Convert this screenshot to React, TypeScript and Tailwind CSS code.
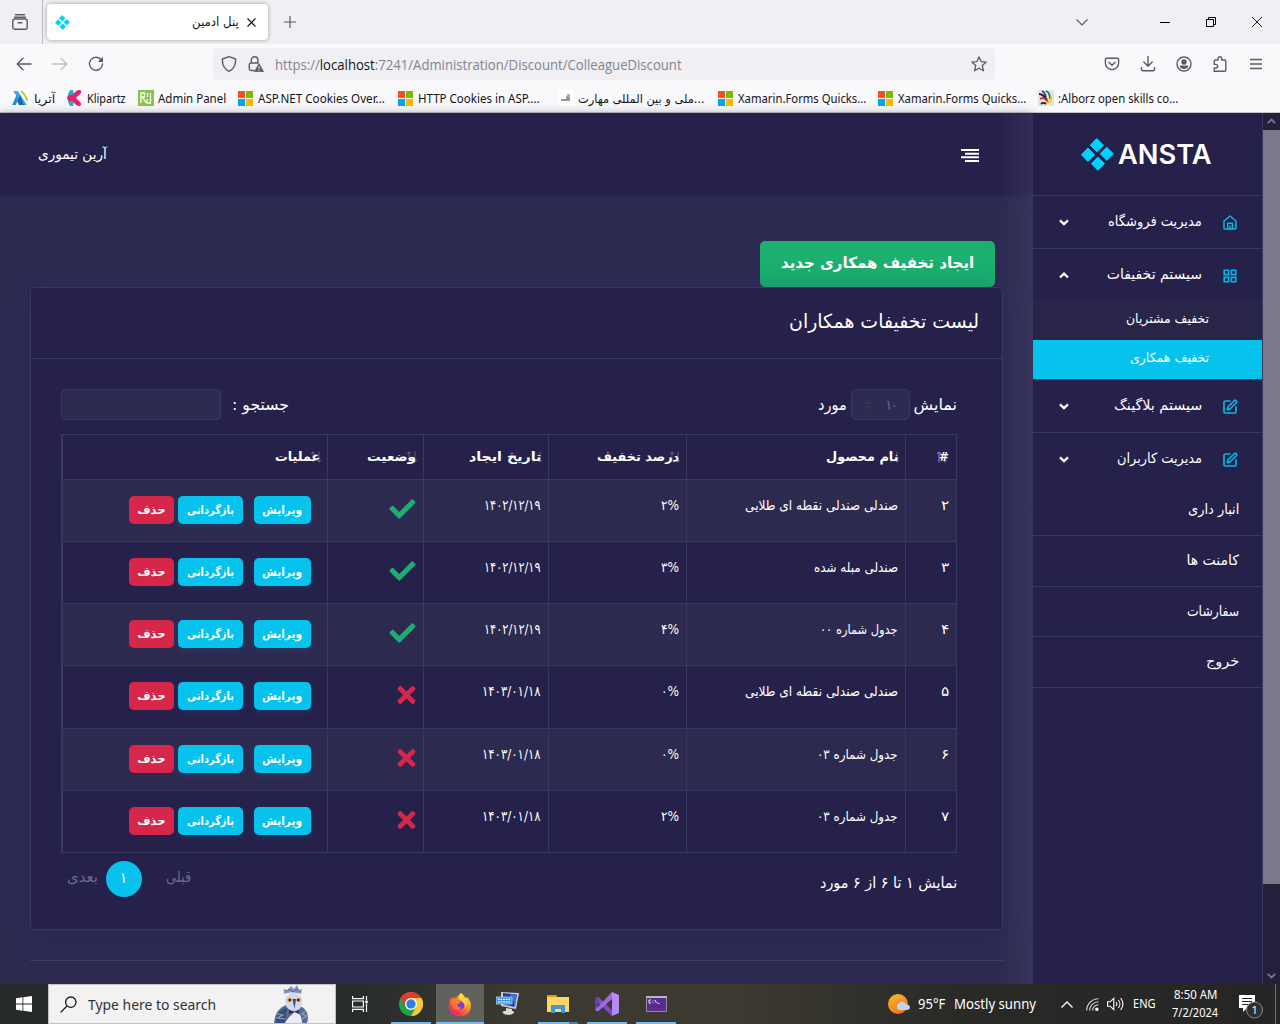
import { useLayoutEffect, useRef, useState, type ReactNode } from "react";
import { SquarePen } from "lucide-react";
import { FaCheck, FaTimes } from "react-icons/fa";

/* One line of text condensed or widened to occupy exactly `w` pixels. */
function Fit({ w, children, className = "", ltr = false }: { w: number; children: ReactNode; className?: string; ltr?: boolean }) {
  const ref = useRef<HTMLSpanElement>(null);
  const [scale, setScale] = useState(1);
  useLayoutEffect(() => {
    if (ref.current) setScale(w / ref.current.offsetWidth);
  }, [w]);
  return (
    <span dir={ltr ? "ltr" : "rtl"} className={`block shrink-0 whitespace-nowrap ${className}`} style={{ width: w }}>
      <span
        ref={ref}
        className={ltr ? "inline-block origin-left" : "inline-block origin-right"}
        style={{ transform: `scaleX(${scale})` }}
      >
        {children}
      </span>
    </span>
  );
}

function Diamonds({ className }: { className: string }) {
  return (
    <svg viewBox="0 0 33 33" className={className} fill="#00d2ff" stroke="#00d2ff" strokeWidth="1" strokeLinejoin="round">
      <path d="M15.700.6 22.500 7.200 15.900 13.700 9.200 7.200ZM6.900 10 13.600 16.800 6.900 23.400.5 16.800ZM25.700 9.200 32.400 15.800 25.900 22.300 19.200 15.800ZM16.800 19.200 23.500 25.600 16.900 32.300 10.300 25.600Z" />
    </svg>
  );
}

function TabStrip() {
  return (
    <div className="flex h-[44px] shrink-0 items-center bg-[#f0eff4] text-[#5b5b66]">
      <div className="flex h-full w-[43px] items-center border-r border-[#bdbcc4] pl-3">
        <svg viewBox="0 0 16 16" className="h-4 w-4" fill="none" stroke="currentColor" strokeWidth="1.4" strokeLinecap="round">
          <path d="M3.5.8h9M2.5 3.2h11" />
          <rect x=".8" y="5" width="14.4" height="10.2" rx="2" />
          <path d="M6.2 8.8h3.6" />
        </svg>
      </div>
      <div className="ml-[4px] flex h-[36px] w-[221px] items-center rounded bg-white shadow-[0_0_4px_rgba(0,0,0,0.35)]">
        <Diamonds className="ml-[8px] h-[15px] w-[15px]" />
        <div className="flex-1" />
        <Fit w={47} className="pt-px font-['DejaVu_Sans'] text-[12.5px] text-[#15141a]">پنل ادمین</Fit>
        <svg viewBox="0 0 9 9" className="ml-[8px] mr-[12px] h-[9px] w-[9px]" stroke="#15141a" strokeWidth="1.1"><path d="m.5.5 8 8m0-8-8 8" /></svg>
      </div>
      <svg viewBox="0 0 12 12" className="ml-[16px] h-3 w-3" stroke="currentColor" strokeWidth="1.2"><path d="M6 0v12M0 6h12" /></svg>
      <div className="flex-1" />
      <svg viewBox="0 0 12 7" className="mr-[72px] h-[7px] w-3" fill="none" stroke="currentColor" strokeWidth="1.2"><path d="m.5.5 5.500 5.500 5.500-5.500" /></svg>
      <svg viewBox="0 0 10 10" className="mr-9 h-[10px] w-[10px]" stroke="#000"><path d="M0 5.500h10" /></svg>
      <svg viewBox="0 0 10 10" className="mr-9 h-[10px] w-[10px]" fill="none" stroke="#000"><path d="M.5 2.500h7v7h-7ZM2.500 2.500v-2h7v7h-2" /></svg>
      <svg viewBox="0 0 10 10" className="mr-[18px] h-[10px] w-[10px]" stroke="#000" strokeWidth=".9"><path d="m0 0 10 10m0-10L0 10" /></svg>
    </div>
  );
}

function AddressBar() {
  return (
    <div className="flex h-[40px] shrink-0 items-center bg-[#f9f9fb] text-[#5b5b66]">
      <svg viewBox="0 0 16 14" className="ml-4 h-[14px] w-4" fill="none" stroke="currentColor" strokeWidth="1.4" strokeLinecap="round" strokeLinejoin="round"><path d="M15 7H1.500M7 1.300 1.300 7 7 12.700" /></svg>
      <svg viewBox="0 0 16 14" className="ml-5 h-[14px] w-4" fill="none" stroke="#bdbdc3" strokeWidth="1.3" strokeLinecap="round" strokeLinejoin="round"><path d="M1 7h13.500M9 1.300 14.700 7 9 12.700" /></svg>
      <svg viewBox="0 0 16 16" className="ml-5 h-4 w-4" fill="none" stroke="currentColor" strokeWidth="1.4" strokeLinecap="round">
        <path d="M13.300 4A6.500 6.500 0 1 0 14.500 8" />
        <path d="M15 .8v5.200H9.800Z" fill="currentColor" stroke="none" />
      </svg>
      <div className="ml-[109px] flex h-8 w-[782px] items-center rounded bg-[#f0eff4]">
        <svg viewBox="0 0 16 16" className="ml-2 h-4 w-4" fill="none" stroke="currentColor" strokeWidth="1.400" strokeLinejoin="round"><path d="M8 .7 14.600 3c.3 6-1.500 10-6.600 12.300C2.900 13 1.100 9 1.400 3Z" /></svg>
        <svg viewBox="0 0 16 16" className="ml-[11px] h-4 w-4" fill="none" stroke="currentColor" strokeWidth="1.4">
          <path d="M3.300 7V4a3.300 3.300 0 0 1 6.600 0v3M6 14.500H3a1.700 1.700 0 0 1-1.700-1.700V8.600C1.300 7.600 2 7 3 7h7" strokeLinecap="round" />
          <path d="m11 7.500 4.700 8.200H6.300Z" fill="currentColor" stroke="currentColor" strokeWidth=".5" strokeLinejoin="round" />
          <path d="M11 10.300v2.800m0 .7v1" stroke="#fff" strokeWidth="1" />
        </svg>
        <Fit ltr w={407} className="ml-[11px] pt-px font-['Open_Sans','Noto_Sans'] text-[14px] text-[#85848c]">
          https://<span className="text-[#15141a]">localhost</span>:7241/Administration/Discount/ColleagueDiscount
        </Fit>
        <div className="flex-1" />
        <svg viewBox="0 0 16 16" className="mr-2 h-4 w-4" fill="none" stroke="currentColor" strokeWidth="1.300" strokeLinejoin="round"><path d="m8 .9 2.100 4.700 5.100.5-3.900 3.500 1.200 5.200L8 12.200l-4.500 2.600 1.200-5.200L.8 6.100l5.100-.5Z" /></svg>
      </div>
      <div className="flex-1" />
      <div className="flex items-center gap-5 pr-4">
        <svg viewBox="0 0 16 16" className="h-4 w-4" fill="none" stroke="currentColor" strokeWidth="1.400" strokeLinecap="round" strokeLinejoin="round"><path d="M2.800 2.200h10.400c.8 0 1.400.6 1.400 1.400V7A6.600 6.600 0 0 1 1.400 7V3.600c0-.8.6-1.400 1.400-1.400ZM4.800 6.300 8 9.300l3.200-3" /></svg>
        <svg viewBox="0 0 16 16" className="h-4 w-4" fill="none" stroke="currentColor" strokeWidth="1.400" strokeLinecap="round"><path d="M8 .5V10M3.800 6 8 10.200 12.200 6M1.400 11.800v1.500c0 1 .6 1.500 1.500 1.500h10.200c1 0 1.500-.6 1.500-1.500v-1.500" /></svg>
        <svg viewBox="0 0 16 16" className="h-4 w-4" fill="none" stroke="currentColor" strokeWidth="1.400"><circle cx="8" cy="8" r="7" /><circle cx="8" cy="6" r="2.700" fill="currentColor" stroke="none" /><path d="M3.600 9.500h8.800c0 2.400-2.200 3.600-4.400 3.600s-4.400-1.200-4.400-3.600Z" fill="currentColor" stroke="none" /></svg>
        <svg viewBox="0 0 16 16" className="h-4 w-4" fill="none" stroke="currentColor" strokeWidth="1.400" strokeLinejoin="round"><path d="M2.200 15.300V12H3.800a1.800 1.800 0 0 0 0-3.600H2.200V5.200C2.200 4.500 2.600 4 3.300 4H6V2.500a1.800 1.800 0 0 1 3.600 0V4h3c.8 0 1.200.5 1.200 1.200v8.900c0 .7-.4 1.200-1.200 1.200Z" /></svg>
        <svg viewBox="0 0 14 12" className="mx-[1px] h-3 w-[14px]" stroke="currentColor" strokeWidth="1.300"><path d="M1 1.500h12M1 6h12M1 10.500h12" /></svg>
      </div>
    </div>
  );
}

function MsIcon() {
  return (
    <span className="grid h-[15px] w-4 shrink-0 grid-cols-[7px_7px] grid-rows-[7px_7px] gap-[1px]">
      <i className="bg-[#f4511e]" /><i className="bg-[#7fb900]" /><i className="bg-[#03a4ee]" /><i className="bg-[#ffb901]" />
    </span>
  );
}

function Bookmark({ w, tw, icon, gap = "ml-[4px]", persian = false, children }: { w: number; tw: number; icon: ReactNode; gap?: string; persian?: boolean; children: ReactNode }) {
  return (
    <div className="flex shrink-0 items-center" style={{ width: w }}>
      {icon}
      <Fit ltr w={tw} className={`${gap} ${persian ? "font-['DejaVu_Sans']" : "font-['Noto_Sans','DejaVu_Sans']"} pt-[2px] text-[12px] leading-4`}>{children}</Fit>
    </div>
  );
}

function Bookmarks() {
  const svg = "h-4 w-4 shrink-0";
  return (
    <div className="flex h-[29px] shrink-0 border-b border-[#c5c5c8] bg-[#f9f9fb] pl-3 text-[#15141a]">
      <Bookmark w={55} tw={21} persian gap="ml-[6px]" icon={<svg viewBox="0 0 16 16" className={svg}><path d="M0 0h16v16H0Z" fill="#fff" /><path d="M1 1h5l9 14h-4Z" fill="#4aa8de" /><path d="M5 4 0 15h4l2-6Z" fill="#2492d4" /><path d="m8 5 4 10H7l-2-4Z" fill="#1769b3" /><path d="M9 1c3 2 5 6 6.500 10" fill="none" stroke="#b4cf20" strokeWidth="2" /></svg>}>آتریا</Bookmark>
      <Bookmark w={71} tw={39} icon={<svg viewBox="0 0 16 16" className={svg}><path d="M3 0h3l2 8-2 8H3l-2-4V4Z" fill="#24b4bf" /><path d="M12 0c2 0 3 1 2 3L9 8l4 4c2 2 1 4-1 4-3 0-4-3-7-5-2 1-5-1-5-3s3-4 5-3c3-2 4-5 7-5Z" fill="#eb206c" /></svg>}>Klipartz</Bookmark>
      <Bookmark w={100} tw={68} icon={<svg viewBox="0 0 16 16" className={svg}><path d="M0 0h16v16H0Z" fill="#8bc34a" /><path d="M3 13V3h3.500v4H4.500L8 13M12.500 3v10H9V9M9.500 3v4" fill="none" stroke="#fff" strokeWidth="1.300" /></svg>}>Admin Panel</Bookmark>
      <Bookmark w={160} tw={127} icon={<MsIcon />}>ASP.NET Cookies Over...</Bookmark>
      <Bookmark w={160} tw={122} icon={<MsIcon />}>HTTP Cookies in ASP....</Bookmark>
      <Bookmark w={160} tw={127} persian icon={<svg viewBox="0 0 16 16" className={svg}><path d="M0 0h16v16H0Z" fill="#fff" /><path d="M3 9h9v2H3ZM8 6l4 1v2H8Z" fill="#9a9a9e" /><path d="M9 4h3v3H9Z" fill="#d6a08a" /></svg>}>ملی و بین المللی مهارت...</Bookmark>
      <Bookmark w={160} tw={128} icon={<MsIcon />}>Xamarin.Forms Quicks...</Bookmark>
      <Bookmark w={160} tw={128} icon={<MsIcon />}>Xamarin.Forms Quicks...</Bookmark>
      <Bookmark w={150} tw={120} icon={<svg viewBox="0 0 16 16" className={svg} fill="none" strokeWidth="1.800"><path d="M0 0h16v16H0Z" fill="#e4e3e4" /><path d="M4 1c3 1 3 4 4 6" stroke="#173f8e" /><path d="M8 1c3 1 4 4 4 8" stroke="#18784b" /><path d="M1 4c4 0 6 3 8 6" stroke="#222" /><path d="M2 9c3-2 6 0 8 3" stroke="#d3262c" /><path d="M13 6c1 5-2 8-5 6" stroke="#f2cf12" /><path d="M3 14c2-2 4-1 5 0" stroke="#222" /></svg>}>:Alborz open skills co...</Bookmark>
    </div>
  );
}

function Arrow({ up = false }: { up?: boolean }) {
  return (
    <svg viewBox="0 0 10 7" className="h-[7px] w-[10px] shrink-0" fill="none" stroke="#fff" strokeWidth="2.300"><path d={up ? "m1 5.500 4-3.800 4 3.800" : "m1 1.300 4 3.800 4-3.800"} /></svg>
  );
}

function MenuRow({ w, icon, up, border = "", h, children }: { w: number; icon: ReactNode; up?: boolean; border?: string; h: string; children: ReactNode }) {
  return (
    <div className={`flex shrink-0 pt-[12px] ${h} ${border}`}>
      <span className="ml-[26px] flex h-[29px] items-center"><Arrow up={up} /></span>
      <div className="flex-1" />
      <Fit w={w} className="pt-px text-[14px] leading-[24px]">{children}</Fit>
      <span className="ml-[20px] mr-[24px] flex h-[29px] w-4 items-center justify-center">{icon}</span>
    </div>
  );
}

function PlainRow({ w, h, children }: { w: number; h: string; children: ReactNode }) {
  return (
    <div className={`flex shrink-0 justify-end border-b border-[#3b3860] pr-[23px] pt-[12px] ${h}`}>
      <Fit w={w} className="text-[14px] leading-[24px]">{children}</Fit>
    </div>
  );
}

function Sidebar() {
  const home = <svg viewBox="0 0 14 15" className="h-[15px] w-[14px]" fill="none" stroke="#06b9e4" strokeWidth="1.500" strokeLinejoin="round"><path d="M1 6 7 1l6 5v7.300q0 .7-.7.7H1.700q-.7 0-.7-.7ZM4.600 14V8.300h4.800V14M7 10.500V14" /></svg>;
  const grid = <svg viewBox="0 0 14 14" className="h-[14px] w-[14px]" fill="none" stroke="#06b9e4" strokeWidth="1.600"><path d="M1.200 1.200h4.400v4.400H1.200ZM8.400 1.200h4.400v4.400H8.400ZM1.200 8.400h4.400v4.400H1.200ZM8.400 8.400h4.400v4.400H8.400Z" /></svg>;
  const pen = <SquarePen size={16} color="#06b9e4" strokeWidth={2.500} />;
  return (
    <aside className="flex w-[230px] shrink-0 flex-col border-r border-[#3b3860] bg-[#25214b] font-['DejaVu_Sans'] text-white">
      <div className="flex h-[83px] shrink-0 items-center border-b border-[#3b3860] pl-[48px]">
        <Diamonds className="h-[33px] w-[33px]" />
        <Fit ltr w={94} className="ml-[4px] font-['Inter'] text-[27.5px] font-semibold leading-8">ANSTA</Fit>
      </div>
      <MenuRow w={94} h="h-[53px]" border="border-b border-[#3b3860]" icon={home}>مدیریت فروشگاه</MenuRow>
      <MenuRow w={95} h="h-[52px]" icon={grid} up>سیستم تخفیفات</MenuRow>
      <div className="flex h-[39px] shrink-0 justify-end bg-[#282549] pr-[53px] pt-[6px]"><Fit w={83} className="text-[13px] leading-[24px]">تخفیف مشتریان</Fit></div>
      <div className="flex h-[39px] shrink-0 justify-end bg-[#06c2ec] pr-[53px] pt-[6px]"><Fit w={79} className="text-[13px] leading-[24px]">تخفیف همکاری</Fit></div>
      <MenuRow w={88} h="h-[54px]" border="border-y border-[#3b3860]" icon={pen}>سیستم بلاگینگ</MenuRow>
      <MenuRow w={85} h="h-[52px]" icon={pen}>مدیریت کاربران</MenuRow>
      <PlainRow w={51} h="h-[51px]">انبار داری</PlainRow>
      <PlainRow w={53} h="h-[51px]">کامنت ها</PlainRow>
      <PlainRow w={52} h="h-[50px]">سفارشات</PlainRow>
      <PlainRow w={33} h="h-[51px]">خروج</PlainRow>
    </aside>
  );
}

const heads: [string, number][] = [["#", 10], ["نام محصول", 72], ["درصد تخفیف", 82], ["تاریخ ایجاد", 72], ["وضعیت", 49], ["عملیات", 45]];
const rows: { n: string; name: string; w: number; pct: string; date: string; dw: number; ok: boolean }[] = [
  { n: "۲", name: "صندلی صندلی نقطه ای طلایی", w: 153, pct: "۲%", date: "۱۴۰۲/۱۲/۱۹", dw: 57, ok: true },
  { n: "۳", name: "صندلی مبله شده", w: 84, pct: "۳%", date: "۱۴۰۲/۱۲/۱۹", dw: 57, ok: true },
  { n: "۴", name: "جدول شماره ۰۰", w: 78, pct: "۴%", date: "۱۴۰۲/۱۲/۱۹", dw: 57, ok: true },
  { n: "۵", name: "صندلی صندلی نقطه ای طلایی", w: 153, pct: "۰%", date: "۱۴۰۳/۰۱/۱۸", dw: 59, ok: false },
  { n: "۶", name: "جدول شماره ۰۳", w: 81, pct: "۰%", date: "۱۴۰۳/۰۱/۱۸", dw: 59, ok: false },
  { n: "۷", name: "جدول شماره ۰۳", w: 81, pct: "۲%", date: "۱۴۰۳/۰۱/۱۸", dw: 59, ok: false },
];

function SortArrows({ active }: { active: boolean }) {
  return (
    <svg viewBox="0 0 12 12" className={`absolute top-[16px] h-3 w-3 ${active ? "right-[8px]" : "right-[5px]"}`} fill="none" stroke="#fff">
      <path d="M3 11.500V1M1 3l2-2.200L5 3" stroke={active ? "#9a90ff" : "#fff"} opacity={active ? 0.9 : 0.28} />
      <path d="M9 .5V11M7 9l2 2.200L11 9" opacity=".28" />
    </svg>
  );
}

function DiscountTable() {
  const cols = "grid grid-cols-[51px_219px_138px_125px_96px_265px]";
  const cell = "border-b border-l border-[#3b3860] pr-[7px]";
  const btn = "flex h-7 justify-center rounded-[5px] pt-[3px] text-[11.5px] font-bold leading-[22px]";
  return (
    <div dir="rtl" className="mt-[14px] w-[896px] border-x border-t border-[#3b3860]">
      <div className={`${cols} h-[45px]`}>
        {heads.map(([t, w], i) => (
          <div key={t} className={`relative pt-[10px] ${cell}`}>
            <Fit w={w} className="text-[13px] font-bold leading-[24px]">{t}</Fit>
            <SortArrows active={i === 0} />
          </div>
        ))}
      </div>
      {rows.map((r, i) => (
        <div key={r.n} className={`${cols} ${i === 3 ? "h-[63px]" : "h-[62px]"} ${i % 2 === 0 ? "bg-[#2d2a50]" : ""}`}>
          <div className={`pt-[13px] ${cell}`}><Fit w={8} className="text-[13.5px] leading-[24px]">{r.n}</Fit></div>
          <div className={`pt-[13px] ${cell}`}><Fit w={r.w} className="text-[13.5px] leading-[24px]">{r.name}</Fit></div>
          <div className={`pt-[13px] ${cell}`}><Fit w={18} className="text-[13.5px] leading-[24px]">{r.pct}</Fit></div>
          <div className={`pt-[13px] ${cell}`}><Fit w={r.dw} className="text-[14px] leading-[24px]">{r.date}</Fit></div>
          <div className={`pt-[16px] ${cell}`}>
            {r.ok ? <FaCheck className="h-[26px] w-[27px] text-[#1bb06f]" /> : <FaTimes className="h-[26px] w-[19px] text-[#d6264a]" />}
          </div>
          <div className="flex border-b border-l border-[#3b3860] pr-4 pt-4">
            <div className={`${btn} w-[57px] bg-[#06c2ec] shadow-[0_2px_6px_rgba(6,194,236,0.12)]`}><Fit w={40}>ویرایش</Fit></div>
            <div className={`${btn} mr-[11px] w-[65px] bg-[#06c2ec] shadow-[0_2px_6px_rgba(6,194,236,0.12)]`}><Fit w={47}>بازگردانی</Fit></div>
            <div className={`${btn} mr-[4px] w-[45px] bg-[#d6264a]`}><Fit w={28}>حذف</Fit></div>
          </div>
        </div>
      ))}
    </div>
  );
}

function Main() {
  return (
    <main className="relative flex w-[1033px] shrink-0 flex-col bg-[#2e2b52] font-['DejaVu_Sans'] text-white">
      <header className="flex h-[82px] shrink-0 items-center justify-between bg-[#25214b] pl-[38px] pr-[54px] shadow-[0_2px_10px_rgba(37,33,75,0.5)]">
        <Fit w={69} className="text-[14px]">آرین تیموری</Fit>
        <svg viewBox="0 0 18 13" className="mt-[3px] h-[13px] w-[18px]" stroke="#fff" strokeWidth="2"><path d="M0 1h18M4 4.700h14M0 8.300h18M4 12h14" /></svg>
      </header>
      <div className="flex flex-col pl-[30px] pr-[30px] pt-[46px]">
        <div className="mr-[8px] flex h-[46px] w-[235px] justify-center self-end rounded-[5px] bg-[#1bb06f] pt-[7px]">
          <Fit w={193} className="text-[15.5px] font-bold leading-[30px]">ایجاد تخفیف همکاری جدید</Fit>
        </div>
        <section className="h-[643px] rounded-[5px] border border-[#3b3860] bg-[#25214b] shadow-[0_8px_30px_rgba(37,33,90,0.45)]">
          <div className="flex h-[71px] justify-end border-b border-[#3b3860] pr-[23px] pt-[18px]">
            <Fit w={190} className="text-[19.5px] leading-[32px]">لیست تخفیفات همکاران</Fit>
          </div>
          <div className="pl-[30px] pr-[45px] pt-[30px]">
            <div className="flex h-[31px] items-center">
              <div className="h-[31px] w-[160px] rounded-[4px] border border-[#3b3860] bg-[#2e2b52]" />
              <Fit w={57} className="ml-[11px] text-[16px]">جستجو :</Fit>
              <div className="flex-1" />
              <Fit w={29} className="text-[16px]">مورد</Fit>
              <div className="ml-[4px] mr-[4px] flex h-[31px] w-[59px] items-center rounded-[5px] border border-[#3b3860] bg-[#2e2b52]">
                <svg viewBox="0 0 8 10" className="ml-3 h-[10px] w-2" fill="#35384a"><path d="m4 0 4 4H0ZM4 10 0 6h8Z" /></svg>
                <Fit w={11} className="ml-[14px] pt-px text-[14px] text-[#77749a]">۱۰</Fit>
              </div>
              <Fit w={43} className="text-[16px]">نمایش</Fit>
            </div>
            <DiscountTable />
            <div className="flex justify-between pt-[8px]">
              <div className="flex h-9 pl-[6px]">
                <Fit w={31} className="text-[15px] leading-[33px] text-[#6c698c]">بعدی</Fit>
                <div className="ml-[8px] mr-[24px] flex h-9 w-9 justify-center rounded-full bg-[#06c2ec]"><Fit w={7} className="text-[15px] leading-[34px]">۱</Fit></div>
                <Fit w={25} className="text-[15px] leading-[33px] text-[#6c698c]">قبلی</Fit>
              </div>
              <Fit w={137} className="pt-[7px] text-[15.5px] leading-[30px]">نمایش ۱ تا ۶ از ۶ مورد</Fit>
            </div>
          </div>
        </section>
        <hr className="mt-[30px] border-[#3f3c63]" />
      </div>
      <div className="pointer-events-none absolute inset-y-0 right-0 w-[34px] bg-gradient-to-r from-transparent to-[#4b476e]/35" />
    </main>
  );
}

function Scrollbar() {
  return (
    <div className="flex flex-1 flex-col items-center justify-between bg-[#23203c] text-[#7b7889]">
      <svg viewBox="0 0 9 6" className="mt-[5px] h-[6px] w-[9px] shrink-0" fill="none" stroke="currentColor" strokeWidth="1.800"><path d="M.8 5.200 4.500 1.500l3.700 3.700" /></svg>
      <div className="mt-[6px] h-[754px] w-full shrink-0 bg-[#7b7889]" />
      <div className="flex-1" />
      <svg viewBox="0 0 9 6" className="mb-[5px] h-[6px] w-[9px] shrink-0" fill="none" stroke="currentColor" strokeWidth="1.800"><path d="M.8.8 4.500 4.500 8.200.8" /></svg>
    </div>
  );
}

function Owl() {
  return (
    <svg viewBox="0 0 36 38" className="h-[38px] w-9">
      <path d="M0 38C1 28 5 23 12 20l16 2c6 4 7 10 5 16Z" fill="#566a96" />
      <path d="M2 34c2-7 6-10 11-11l-2 15H2Z" fill="#3a4c78" />
      <path d="M11 38c2-4 7-9 11-12 5 3 6 8 6 12Z" fill="#eceaf2" />
      <path d="M3 29l6 1-6 3 8 1M31 26l-3 3 5 2-5 3" fill="none" stroke="#93a2c8" strokeWidth="1.100" />
      <path d="M11 17c0-6 4-9 9-9s9 3 8 10c0 5-4 8-8 8s-9-4-9-9Z" fill="#d3d8ea" />
      <path d="m10 9-.5-5 4 1L17 1l3 3 3-4 2 5 3-1-1 5c-5-2-12-2-17 0Z" fill="#8792bd" />
      <path d="m12 7 3-3 4 3 4-3 3 3" fill="none" stroke="#5b6797" />
      <circle cx="15.500" cy="15" r="2.300" fill="#e9923a" /><circle cx="24.500" cy="15" r="2.300" fill="#e9923a" />
      <circle cx="15.800" cy="15" r="1.200" fill="#1a1a22" /><circle cx="24.200" cy="15" r="1.200" fill="#1a1a22" />
      <path d="M18.500 14h3.500l-1.500 10Z" fill="#34498a" /><path d="m15 25 5 2 5-2v4l-5-2-5 2Z" fill="#2a3350" />
    </svg>
  );
}

function TaskIcon({ w, line = "", active = false, children }: { w: string; line?: string; active?: boolean; children: ReactNode }) {
  return (
    <div className={`flex h-full shrink-0 flex-col items-center ${w} ${active ? "bg-[#61625c]" : ""}`}>
      <div className="flex h-[38px] items-center pt-[2px]">{children}</div>
      <div className={`h-[2px] ${line}`} />
    </div>
  );
}

function Taskbar() {
  return (
    <footer className="flex h-[40px] shrink-0 items-center bg-[linear-gradient(90deg,#262a2a_0%,#282c2b_28%,#3b3930_40%,#3b3930_58%,#292a27_75%,#252525_100%)] font-['Noto_Sans'] text-white">
      <svg viewBox="0 0 16 16" className="ml-4 h-4 w-4" fill="#fff"><path d="M0 2.200 6.500 1.300V7.600H0ZM7.300 1.200 16 0v7.600H7.300ZM0 8.400h6.500v6.300L0 13.800ZM7.300 8.400H16V16l-8.700-1.200Z" /></svg>
      <div className="ml-4 flex h-[40px] w-[288px] items-center border border-[#c2c2c2] bg-[#f2f2f2]">
        <svg viewBox="0 0 17 17" className="ml-[11px] h-[17px] w-[17px]" fill="none" stroke="#1a1a1a" strokeWidth="1.300"><circle cx="10.800" cy="6.200" r="5.200" /><path d="M7 10 .6 16.400" /></svg>
        <Fit ltr w={128} className="ml-[11px] text-[15px] leading-5 text-[#333]">Type here to search</Fit>
        <div className="ml-[58px] self-end"><Owl /></div>
      </div>
      <div className="flex w-[50px] justify-center">
        <svg viewBox="0 0 16 16" className="-ml-[2px] h-4 w-4" fill="none" stroke="#fff" strokeWidth="1.200"><path d="M.6 0v2.600h10.800V0M.6 16v-2.600h10.800V16M.6 5h10.800v6H.6ZM14.500 0v4M14.500 8v8" /><path d="M13.300 4.500h2.400v2.800h-2.400Z" fill="#fff" stroke="none" /></svg>
      </div>
      <TaskIcon w="w-[50px]" line="w-10 bg-[#76b9ed]">
        <svg viewBox="0 0 24 24" className="h-6 w-6">
          <circle cx="12" cy="12" r="12" fill="#1ea24c" />
          <path d="M12 6h10.400A12 12 0 0 1 12 24l5.200-9Z" fill="#fcc934" />
          <path d="M1.600 6A12 12 0 0 1 22.400 6H12a6 6 0 0 0-5.200 9Z" fill="#e33b2e" />
          <circle cx="12" cy="12" r="6" fill="#fff" /><circle cx="12" cy="12" r="4.700" fill="#317fe8" />
        </svg>
      </TaskIcon>
      <TaskIcon w="w-[48px]" line="w-full bg-[#76b9ed]" active>
        <svg viewBox="0 0 24 24" className="h-6 w-6">
          <defs><linearGradient id="fx" x1="1" y1="0" x2=".2" y2="1"><stop stopColor="#fff14f" /><stop offset=".45" stopColor="#ff9328" /><stop offset=".8" stopColor="#ff364f" /><stop offset="1" stopColor="#e91f7e" /></linearGradient></defs>
          <path d="M13 1c3 2 3 4 5 5l1-1c3 3 4 6 4 9a11 10.500 0 0 1-22 0c0-4 1-7 3-9l1 2 2-2 1 2c1-3 3-4 5-6Z" fill="url(#fx)" />
          <circle cx="12" cy="13" r="4.600" fill="#7540d8" /><path d="M3.500 9c3-2 5-2 7-.5l3 1.500-4 2c-1 2 1 4 4 3.500-2 3-7 3-9-1-1-2-1-3.500-1-5.500Z" fill="#ff7a26" /><path d="M13 1c3 2 3 4 5 6 2 4 1 7-1 9 1-6-5-6-6-10 0-2 1-3 2-5Z" fill="#ffd53a" />
        </svg>
      </TaskIcon>
      <TaskIcon w="w-[48px]">
        <svg viewBox="0 0 24 24" className="h-6 w-6"><path d="m5 0 18 1-3 16-15-3Z" fill="#c9cdd2" /><path d="m7 1 14 1.500-2.500 12.500L7 12.500Z" fill="#163db3" /><path d="m14 2 7 .5-2 12Z" fill="#3973df" /><path d="M0 5h16v7H0Z" fill="#3f93d6" stroke="#c7e2f4" strokeWidth=".7" /><path d="M2 7.300h13M2 9.800h13" stroke="#fff" strokeWidth="1.200" strokeDasharray="1.600 1" /><path d="m10 16 6 1v2c3 0 3 3-3 4-6 0-8-3-5-4h2Z" fill="#d8dadd" /></svg>
      </TaskIcon>
      <TaskIcon w="w-[52px]" line="w-10 bg-[linear-gradient(90deg,#76b9ed_78%,#527c9c_78%)]">
        <svg viewBox="0 0 22 20" className="h-5 w-[22px]"><path d="M0 1h9l2 3H0Z" fill="#e19a0e" /><path d="M0 3h22v15H0Z" fill="#ffd563" /><path d="M4 19v-8h14v8h-4v-4H8v4Z" fill="#3d97db" /></svg>
      </TaskIcon>
      <TaskIcon w="w-[46px]" line="w-10 bg-[#76b9ed]">
        <svg viewBox="0 0 24 24" className="h-6 w-6"><path d="m17 0 7 3v18l-7 3Z" fill="#b58af2" /><path d="M0 6 3 4.500 17 18v6L0 8Z" fill="#7d4bc0" /><path d="M0 6v12l3 1.500V4.500Z" fill="#6a3bb0" /><path d="M0 18 17 0v7L3 19.500Z" fill="#9a6be0" /></svg>
      </TaskIcon>
      <TaskIcon w="w-[52px]" line="w-10 bg-[#76b9ed]">
        <svg viewBox="0 0 21 16" className="h-4 w-[21px]"><path d="M.5.5h20v15H.5Z" fill="#5a2a91" stroke="#8f8b99" /><path d="M0 0h21v2H0Z" fill="#b9b5c2" /><path d="M5 4H3v3h2M7 4.500v.8m0 1v.8M9 4l1.500 3M11.500 7.300h2" fill="none" stroke="#fff" strokeWidth=".9" /></svg>
      </TaskIcon>
      <div className="flex-1" />
      <svg viewBox="0 0 23 20" className="h-5 w-[23px]"><defs><linearGradient id="sun" x1="0" y1="0" x2=".5" y2="1"><stop stopColor="#f9bd2e" /><stop offset="1" stopColor="#f2741d" /></linearGradient></defs><circle cx="10" cy="10" r="10" fill="url(#sun)" /><path d="M11 16a3.500 3.500 0 0 1 0-6.500c2-3 6-2 7 1 5 0 5 5 1.500 5.500Z" fill="#bcd6f8" /></svg>
      <Fit ltr w={27} className="ml-[7px] text-[13.5px]">95°F</Fit>
      <Fit ltr w={82} className="ml-[9px] text-[13.5px]">Mostly sunny</Fit>
      <svg viewBox="0 0 12 7" className="ml-[25px] h-[7px] w-3" fill="none" stroke="#fff" strokeWidth="1.300"><path d="M.5 6.500 6 1l5.500 5.500" /></svg>
      <svg viewBox="0 0 13 13" className="ml-[13px] h-[13px] w-[13px]" fill="none" stroke="#fff" strokeWidth="1.100"><path d="M.6 12.500A12 12 0 0 1 12.500.8M3.500 12.500a9 9 0 0 1 9-8.700M6.500 12.500a6 6 0 0 1 6-5.700" opacity=".8" /><circle cx="10.800" cy="11.200" r="1.700" fill="#fff" stroke="none" /></svg>
      <svg viewBox="0 0 17 14" className="ml-[8px] h-[14px] w-[17px]" fill="none" stroke="#fff" strokeWidth="1.100"><path d="M.6 4.800h2.600L6.800 1.300v11.400L3.200 9.200H.6ZM9 5a3 3 0 0 1 0 4M11.300 3a6 6 0 0 1 0 8M13.600 1a9 9 0 0 1 0 12" /></svg>
      <Fit ltr w={23} className="ml-[9px] text-[12px]">ENG</Fit>
      <div className="ml-[16px] flex w-[46px] flex-col items-center text-[12px] leading-[18px]"><Fit ltr w={43}>8:50 AM</Fit><Fit ltr w={46}>7/2/2024</Fit></div>
      <svg viewBox="0 0 25 25" className="ml-[21px] mt-1 h-[25px] w-[25px]"><path d="M0 1h16v13H8l-4 4v-4H0Z" fill="#fff" /><path d="M3 4.500h10M3 7.500h10M3 10.500h6" stroke="#262626" /><circle cx="15.500" cy="16" r="8" fill="#303030" stroke="#8a8a8a" /><text x="12.500" y="20" fontSize="11" fill="#fff">1</text></svg>
      <div className="ml-[11px] mr-[4px] h-full w-px bg-[#6f6f6f]" />
    </footer>
  );
}

export default function App() {
  return (
    <div dir="ltr" className="flex h-[1024px] w-[1280px] flex-col overflow-hidden">
      <TabStrip />
      <AddressBar />
      <Bookmarks />
      <div className="flex h-[871px] shrink-0">
        <Main />
        <Sidebar />
        <Scrollbar />
      </div>
      <Taskbar />
    </div>
  );
}
